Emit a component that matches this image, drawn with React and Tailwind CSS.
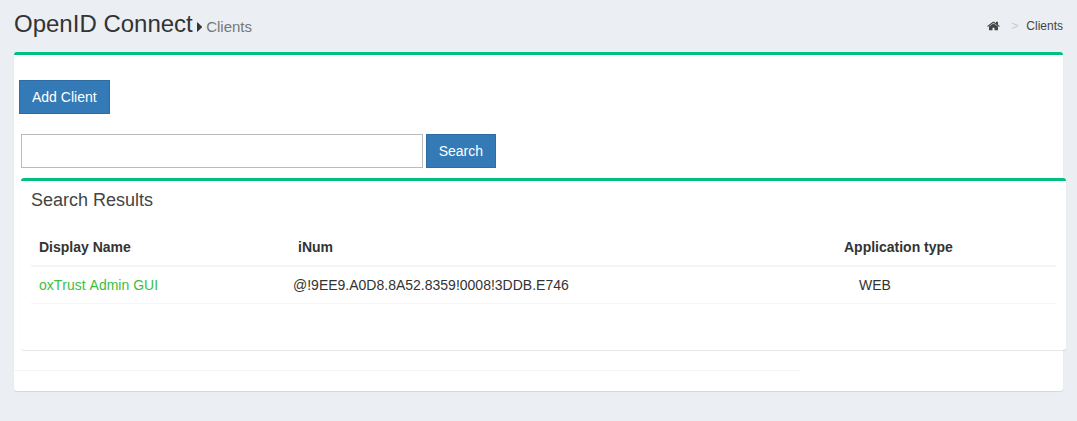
function HomeIcon() {
  return (
    <svg className="mr-px block h-3 w-[13px]" viewBox="64 0 1664 1792" preserveAspectRatio="none" fill="currentColor" aria-hidden="true">
      <path d="M1472 992v480q0 26-19 45t-45 19h-384v-384h-256v384h-384q-26 0-45-19t-19-45v-480q0-1 .5-3t.5-3l575-474 575 474q1 2 1 6zm223-69l-62 74q-8 9-21 11h-3q-13 0-21-7l-692-577-692 577q-12 8-24 7-13-2-21-11l-62-74q-8-10-7-23.5t11-21.5l719-599q32-26 76-26t76 26l244 204v-195q0-14 9-23t23-9h192q14 0 23 9t9 23v408l219 182q10 8 11 21.5t-7 23.5z" />
    </svg>
  );
}

function CaretIcon() {
  return (
    <svg className="mt-[22px] ml-[4px] h-[10px] w-[5px]" viewBox="0 0 5 10" fill="currentColor" aria-hidden="true">
      <path d="M0 .8Q0 0 .7.4L4.8 4.4Q5.2 5 4.8 5.5L.7 9.5Q0 10 0 9.2Z" />
    </svg>
  );
}

function Button({ children, className }) {
  return (
    <button className={`h-[34px] border border-[#2e6da4] bg-[#337ab7] text-left text-sm text-white ${className}`}>
      {children}
    </button>
  );
}

function PageHeader() {
  return (
    <header className="flex h-[52px] justify-between px-[14px] text-[#333]">
      <div className="flex">
        <h1 className="mt-[9px] text-2xl leading-[30px]">OpenID Connect</h1>
        <CaretIcon />
        <span className="mt-[17px] ml-[4.4px] text-[15px] leading-5 text-[#777]">Clients</span>
      </div>
      <nav className="mt-4 flex h-5 items-center text-xs text-[#444]">
        <HomeIcon />
        <span className="ml-[10.5px] text-[#ccc]">&gt;</span>
        <span className="ml-[8px]">Clients</span>
      </nav>
    </header>
  );
}

function ResultsTable() {
  return (
    <table className="w-full table-fixed text-left text-sm leading-5 text-[#333]">
      <colgroup>
        <col className="w-[254px]" />
        <col className="w-[551px]" />
        <col />
      </colgroup>
      <thead>
        <tr className="h-[38px] border-b-2 border-[#f4f4f4]">
          <th className="px-2 pt-px font-bold">Display Name</th>
          <th className="pt-px pl-[13px] font-bold">iNum</th>
          <th className="pt-px pl-2 font-bold">Application type</th>
        </tr>
      </thead>
      <tbody>
        <tr className="h-[37px] border-b border-[#f4f4f4]">
          <td className="px-2 text-[#3dbe3d] [font-kerning:none]">oxTrust Admin GUI</td>
          <td className="pl-2">@!9EE9.A0D8.8A52.8359!0008!3DDB.E746</td>
          <td className="pl-[23px]">WEB</td>
        </tr>
      </tbody>
    </table>
  );
}

export default function App() {
  return (
    <div className="h-[421px] overflow-hidden bg-[#ebeef3] font-['Liberation_Sans',Arial,sans-serif]">
      <PageHeader />
      <main className="ml-[14px] h-[339px] w-[1049px] rounded-[3px] border-t-[3px] border-[#00c07f] bg-white pt-[25px] shadow-[0_1px_1px_rgba(0,0,0,0.1)]">
        <Button className="ml-[5px] block w-[91px] pl-3">Add Client</Button>
        <div className="mt-5 ml-[7px] flex">
          <input aria-label="Search clients" className="h-[34px] w-[402px] border border-[#bbb] bg-white px-2 text-sm outline-none" />
          <Button className="ml-[3px] w-[70px] pl-[11.7px]">Search</Button>
        </div>
        <section className="mt-[10px] ml-[7px] h-[172px] w-[1045px] rounded-[3px] border-t-[3px] border-[#00c07f] bg-white px-[10px] pt-[9px] shadow-[0_1px_1px_rgba(0,0,0,0.1)]">
          <h2 className="mb-[18px] text-lg leading-5 text-[#444]">Search Results</h2>
          <ResultsTable />
        </section>
        <div className="mt-5 h-px w-[786px] bg-[#f4f4f4]" />
      </main>
    </div>
  );
}
